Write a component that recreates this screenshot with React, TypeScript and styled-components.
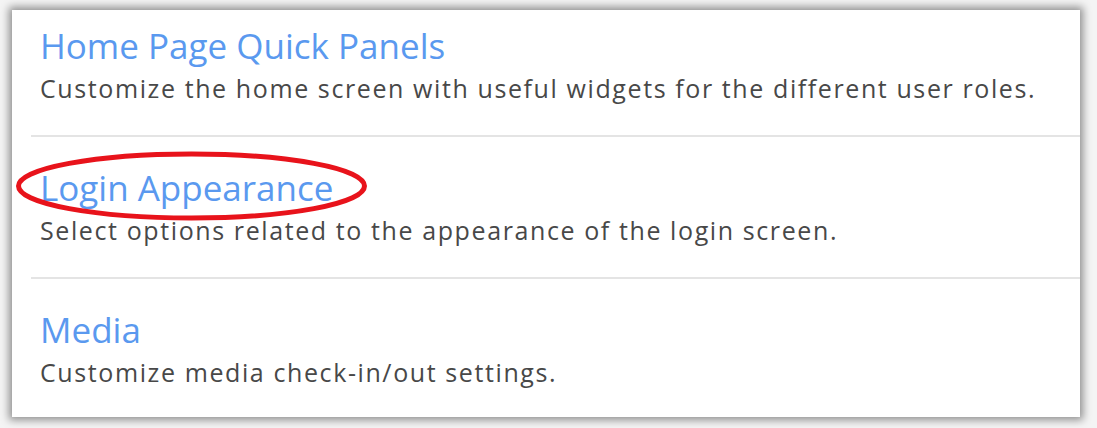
import styled, { createGlobalStyle } from "styled-components";

const GlobalStyle = createGlobalStyle`
  html, body {
    margin: 0;
    padding: 0;
    background: #ffffff;
  }
  body {
    font-family: "Open Sans", "Liberation Sans", sans-serif;
  }
`;

const Page = styled.div`
  width: 1097px;
  height: 428px;
  box-sizing: border-box;
  padding: 10px 17px 11px 12px;
  background: #f4f4f4;
`;

const Panel = styled.div`
  position: relative;
  height: 100%;
  background: #ffffff;
  box-shadow: 0 0 8px 3px rgba(0, 0, 0, 0.42);
  overflow: hidden;
`;

const List = styled.ul`
  list-style: none;
  margin: 0;
  padding: 0 0 0 19px;
`;

const Item = styled.li`
  padding: 27px 0 31px 9px;
  border-bottom: 2px solid #e4e4e4;

  &:first-child {
    padding-top: 12px;
  }

  &:last-child {
    border-bottom: none;
  }
`;

const Title = styled.a`
  display: block;
  font-size: 35px;
  line-height: 48px;
  color: #5a99ef;
  text-decoration: none;
  cursor: pointer;
`;

const Description = styled.p`
  margin: 2px 0 0;
  font-size: 25px;
  line-height: 32px;
  letter-spacing: 1.6px;
  color: #484848;
`;

const Highlight = styled.svg`
  position: absolute;
  left: 0;
  top: 0;
  pointer-events: none;
`;

const settings = [
  {
    title: "Home Page Quick Panels",
    text: "Customize the home screen with useful widgets for the different user roles.",
  },
  {
    title: "Login Appearance",
    text: "Select options related to the appearance of the login screen.",
  },
  {
    title: "Media",
    text: "Customize media check-in/out settings.",
  },
];

export default function App() {
  return (
    <>
      <GlobalStyle />
      <Page>
        <Panel>
          <List>
            {settings.map((s) => (
              <Item key={s.title}>
                <Title>{s.title}</Title>
                <Description>{s.text}</Description>
              </Item>
            ))}
          </List>
          <Highlight width="400" height="230">
            <ellipse
              cx="179.5"
              cy="176"
              rx="173"
              ry="32"
              fill="none"
              stroke="#e8131b"
              strokeWidth="5"
            />
          </Highlight>
        </Panel>
      </Page>
    </>
  );
}
